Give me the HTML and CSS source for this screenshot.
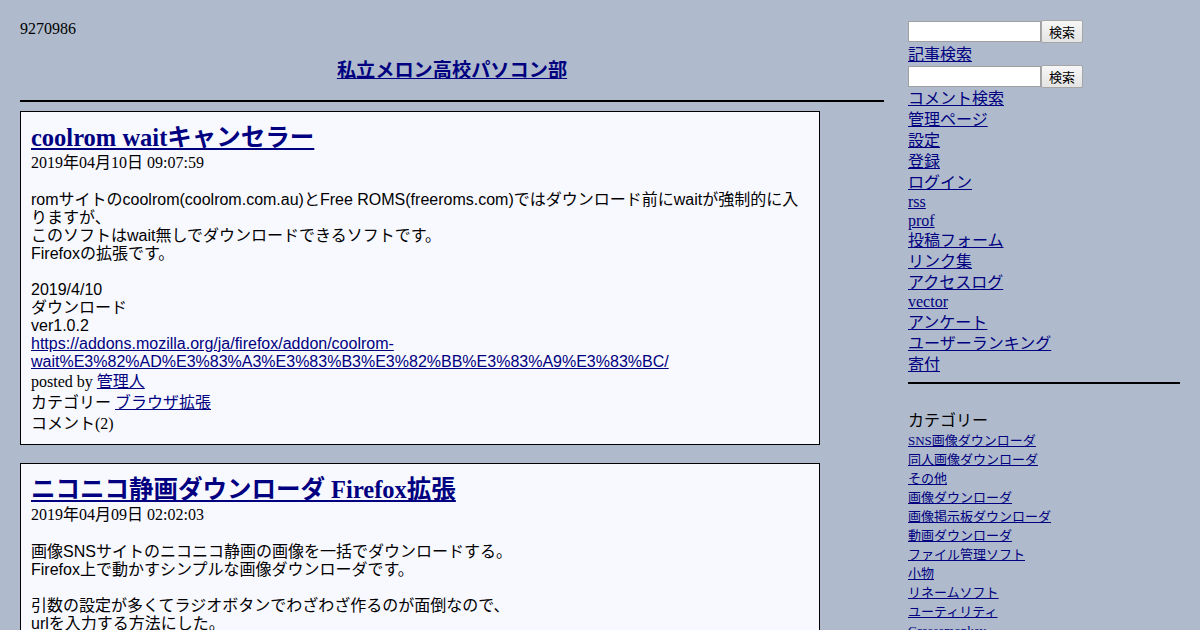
FILE: index.html
```html
<!DOCTYPE html>
<html lang="ja">
<head>
    <meta charset="UTF-8">
    <title>私立メロン高校パソコン部</title>
    <link rel="stylesheet" href="styles.css">
</head>
<body>
<div class="page">
    <div class="main">
        <div class="counter">9270986</div>
        <h1 class="site-title"><a href="#">私立メロン高校パソコン部</a></h1>
        <hr class="rule">

        <div class="entry">
            <h2 class="entry-title"><a href="#">coolrom waitキャンセラー</a></h2>
            <div class="entry-date">2019年04月10日 09:07:59</div>
            <div class="entry-body">romサイトのcoolrom(coolrom.com.au)とFree ROMS(freeroms.com)ではダウンロード前にwaitが強制的に入りますが、<br>このソフトはwait無しでダウンロードできるソフトです。<br>Firefoxの拡張です。<br><br>2019/4/10<br>ダウンロード<br>ver1.0.2<br><a href="#">https://addons.mozilla.org/ja/firefox/addon/coolrom-wait%E3%82%AD%E3%83%A3%E3%83%B3%E3%82%BB%E3%83%A9%E3%83%BC/</a></div>
            <div class="entry-meta">posted by <a href="#">管理人</a></div>
            <div class="entry-meta">カテゴリー <a href="#">ブラウザ拡張</a></div>
            <div class="entry-meta">コメント(2)</div>
        </div>

        <div class="entry">
            <h2 class="entry-title"><a href="#">ニコニコ静画ダウンローダ Firefox拡張</a></h2>
            <div class="entry-date">2019年04月09日 02:02:03</div>
            <div class="entry-body">画像SNSサイトのニコニコ静画の画像を一括でダウンロードする。<br>Firefox上で動かすシンプルな画像ダウンローダです。<br><br>引数の設定が多くてラジオボタンでわざわざ作るのが面倒なので、<br>urlを入力する方法にした。<br>ダウンロードしたいページのurlを入力して実行するだけです。</div>
            <div class="entry-meta">posted by <a href="#">管理人</a></div>
        </div>
    </div>

    <div class="side">
        <form class="search">
            <input type="text" class="search-box">
            <button type="button" class="search-btn">検索</button>
        </form>
        <a class="side-link first" href="#">記事検索</a>
        <form class="search">
            <input type="text" class="search-box">
            <button type="button" class="search-btn">検索</button>
        </form>
        <a class="side-link" href="#">コメント検索</a>
        <a class="side-link" href="#">管理ページ</a>
        <a class="side-link" href="#">設定</a>
        <a class="side-link" href="#">登録</a>
        <a class="side-link" href="#">ログイン</a>
        <a class="side-link latin" href="#">rss</a>
        <a class="side-link latin" href="#">prof</a>
        <a class="side-link" href="#">投稿フォーム</a>
        <a class="side-link" href="#">リンク集</a>
        <a class="side-link" href="#">アクセスログ</a>
        <a class="side-link latin" href="#">vector</a>
        <a class="side-link" href="#">アンケート</a>
        <a class="side-link" href="#">ユーザーランキング</a>
        <a class="side-link" href="#">寄付</a>
        <hr class="rule side-rule">

        <div class="cat-head">カテゴリー</div>
        <ul class="cat-list">
            <li><a href="#">SNS画像ダウンローダ</a></li>
            <li><a href="#">同人画像ダウンローダ</a></li>
            <li><a href="#">その他</a></li>
            <li><a href="#">画像ダウンローダ</a></li>
            <li><a href="#">画像掲示板ダウンローダ</a></li>
            <li><a href="#">動画ダウンローダ</a></li>
            <li><a href="#">ファイル管理ソフト</a></li>
            <li><a href="#">小物</a></li>
            <li><a href="#">リネームソフト</a></li>
            <li><a href="#">ユーティリティ</a></li>
            <li><a href="#">Greasemonkey</a></li>
            <li><a href="#">ブラウザ拡張</a></li>
        </ul>
    </div>
</div>
</body>
</html>
```

FILE: styles.css
```css
body {
    margin: 0;
    background-color: #afbbcc;
    color: #000;
    font-family: "Liberation Serif", "Noto Sans CJK JP", serif;
    font-size: 16px;
}

a {
    color: #000080;
}

.page {
    display: grid;
    grid-template-columns: 864px 272px;
    column-gap: 24px;
    padding: 20px 20px 0 20px;
}

.counter {
    line-height: 18px;
}

.site-title {
    margin: 21px 0 17px 0;
    font-size: 19.2px;
    line-height: 24px;
    text-align: center;
}

.rule {
    border: none;
    height: 2px;
    background-color: #000;
    margin: 0 0 9px 0;
}

.entry {
    width: 800px;
    box-sizing: border-box;
    border: 1px solid #000;
    background-color: #f8f8ff;
    padding: 10px;
    margin-bottom: 18px;
}

.entry-title {
    margin: 0;
    font-size: 24.5px;
    line-height: 31px;
}

.entry-date {
    line-height: 20px;
}

.entry-body {
    margin-top: 18px;
    font-family: "Liberation Sans", "Noto Sans CJK JP", sans-serif;
    line-height: 18px;
}

.entry-meta {
    line-height: 21px;
}

/* sidebar */
.side {
    display: flex;
    flex-direction: column;
    align-items: flex-start;
}

.search {
    display: flex;
    align-items: center;
    height: 23px;
    margin: 0;
}

.search-box {
    width: 133px;
    height: 21px;
    box-sizing: border-box;
    border: 1px solid #a0a0a0;
    background: #fff;
    padding: 1px 2px;
    margin: 0;
}

.search-btn {
    height: 23px;
    width: 42px;
    box-sizing: border-box;
    margin: 0;
    padding: 0;
    border: 1px solid #a6a6a6;
    border-radius: 2px;
    background: linear-gradient(#f6f6f6, #e4e4e4);
    font-family: "Noto Sans CJK JP", sans-serif;
    font-size: 13px;
    color: #000;
}

.side-link {
    line-height: 21px;
}

.side-link.first {
    padding-top: 1px;
}

.side-link.latin {
    line-height: 18.5px;
}

.side-rule {
    align-self: stretch;
    margin: 7px 0 26px 0;
}

.cat-head {
    line-height: 21px;
}

.cat-list {
    list-style: none;
    margin: 0;
    padding: 0;
    font-size: 13px;
    line-height: 19px;
}
```
